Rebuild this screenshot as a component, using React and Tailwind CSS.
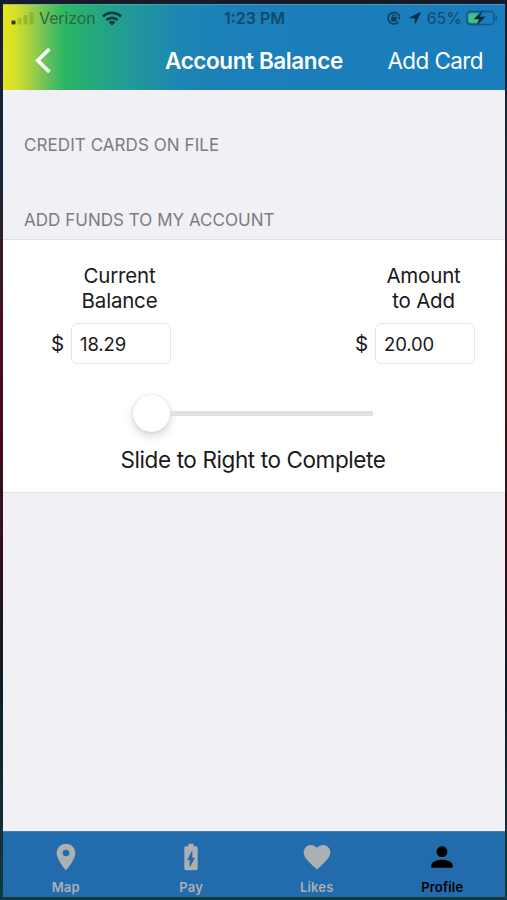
import React, { useState } from "react";
import {
  MdLocationOn,
  MdBatteryChargingFull,
  MdFavorite,
  MdPerson,
} from "react-icons/md";

const tabs = [
  { name: "Map", icon: MdLocationOn },
  { name: "Pay", icon: MdBatteryChargingFull },
  { name: "Likes", icon: MdFavorite },
  { name: "Profile", icon: MdPerson },
];

const StatusBar = () => (
  <div className="flex h-[26px] items-center justify-between pl-2 pr-[7px] text-[16px] leading-[26px] text-[#123a4c]/80">
    <div className="flex w-[140px] items-center">
      <svg width="23" height="14" viewBox="0 0 23 14">
        <rect x="0.5" y="9.5" width="4" height="4" rx="1" fill="#2b3a10" />
        <g fill="#4f7a20" opacity="0.3">
          <rect x="6.5" y="7" width="4" height="6.5" rx="1" />
          <rect x="12.5" y="4" width="4" height="9.5" rx="1" />
          <rect x="18.5" y="1" width="4" height="12.5" rx="1" />
        </g>
      </svg>
      <span className="ml-[5px] tracking-[-0.1px] text-[#2f6440]">Verizon</span>
      <svg
        className="ml-[6px]"
        width="20"
        height="15"
        viewBox="0 0 20 15"
        fill="none"
        stroke="#0e3b41"
        strokeWidth="2.8"
      >
        <path d="M1 5.6a12.8 12.8 0 0 1 18 0" />
        <path d="M4.4 9.1a8 8 0 0 1 11.2 0" />
        <path d="M10 14.4 6.7 11.2a4.7 4.7 0 0 1 6.6 0Z" fill="#0e3b41" stroke="none" />
      </svg>
    </div>
    <span className="text-[16px] font-semibold">1:23 PM</span>
    <div className="flex w-[140px] items-center justify-end">
      <svg
        width="14"
        height="14"
        viewBox="0 0 14 14"
        fill="none"
        stroke="#103a52"
        strokeWidth="1.5"
      >
        <path d="M12.5 5.5A5.8 5.8 0 1 0 11.4 11" />
        <path d="M10.5 6h3.2l-1.4 2.4Z" fill="#103a52" stroke="none" />
        <rect x="4.2" y="6.2" width="5.4" height="4.2" fill="#103a52" stroke="none" />
        <path d="M5.4 6.5V5.2a1.5 1.5 0 0 1 3 0v1.3" strokeWidth="1.1" />
      </svg>
      <svg className="ml-2" width="12" height="12" viewBox="0 0 12 12">
        <path
          d="M11.5.5.8 5.8h5.4v5.4Z"
          fill="#0c3048"
          stroke="#0c3048"
          strokeWidth="1"
          strokeLinejoin="round"
        />
      </svg>
      <span className="ml-[6px]">65%</span>
      <svg className="ml-1" width="32" height="18" viewBox="0 0 32 18">
        <rect
          x="0.75"
          y="2.5"
          width="27"
          height="13"
          rx="3.5"
          fill="none"
          stroke="#15547f"
          strokeWidth="1.3"
        />
        <rect x="2.5" y="4.2" width="10" height="9.6" rx="2" fill="#45c376" />
        <rect x="10" y="4.2" width="4.5" height="9.6" fill="#45c376" />
        <path d="M29.5 6.5v5c2.2-.9 2.2-4.1 0-5Z" fill="#15547f" />
        <path
          d="M17 .5 7.6 10.3h5.2l-2.6 7.2 9.6-10h-5.4Z"
          fill="#0b2a3a"
          stroke="#1d7cb8"
          strokeWidth="0.4"
        />
      </svg>
    </div>
  </div>
);

const Header = () => (
  <header className="h-[86px] border-t border-[#6fa6bb]/60 bg-[linear-gradient(90deg,#e6e61e_0px,#d6e028_12px,#a5cf45_28px,#66c15a_44px,#2cb764_61px,#26ab78_85px,#229b97_125px,#1d86b2_175px,#1b7fba_230px,#1a7dbd_100%)]">
    <StatusBar />
    <div className="flex h-[59px] items-center pl-8 pr-[22px] pt-px text-[22.5px] leading-[58px] text-white">
      <button aria-label="Back" className="w-[130px]">
        <svg
          className="-mt-px"
          width="16"
          height="27"
          viewBox="0 0 16 27"
          fill="none"
          stroke="currentColor"
          strokeWidth="3.6"
        >
          <path d="M14.4 2 2.7 13.5 14.4 25" />
        </svg>
      </button>
      <h1 className="grow font-semibold tracking-[-0.4px]">Account Balance</h1>
      <button className="tracking-[-0.6px]">Add Card</button>
    </div>
  </header>
);

const MoneyField = ({ label, value, onChange }) => (
  <label className="w-[121px]">
    <span className="ml-5 block w-[99px] text-center text-[20.5px] leading-[25px] tracking-[-0.2px]">
      {label[0]}
      <br />
      {label[1]}
    </span>
    <span className="mt-[10px] flex items-center justify-between">
      <span className="ml-px mt-px text-[20.5px] leading-none">$</span>
      <input
        value={value}
        onChange={onChange}
        className="h-[41px] w-[100px] rounded-[6px] border-[1.5px] border-[#e6e6e8] bg-white pl-[8px] text-[18.5px] tracking-[-0.1px] outline-none"
      />
    </span>
  </label>
);

const TabBar = () => (
  <nav className="flex h-[66px] border-t border-[#4b7fae] bg-[#226bad]">
    {tabs.map(({ name, icon: Icon }) => (
      <button
        key={name}
        className={`flex flex-1 flex-col items-center pt-[9px] ${
          name === "Profile" ? "text-black" : "text-[#adb0b3]"
        }`}
      >
        <Icon size={32} />
        <span className="mt-[6px] text-[13px] font-semibold leading-4 tracking-[0.2px]">
          {name}
        </span>
      </button>
    ))}
  </nav>
);

const App = () => {
  const [balance, setBalance] = useState("18.29");
  const [amount, setAmount] = useState("20.00");

  return (
    <div className="h-[900px] w-[507px] bg-[linear-gradient(180deg,#141b29_0px,#1c2838_180px,#4a0f1c_330px,#3a0d18_520px,#101c26_680px,#123840_100%)] pb-[3px] pl-[3px] pr-[2px] pt-1 font-['Inter',sans-serif] text-[#1a1a1a]">
      <div className="flex h-full flex-col bg-[#f0f0f5]">
        <Header />
        <main className="grow text-[17px] text-[#7c7c82]">
          <h2 className="flex h-[75px] items-end pb-[10px] pl-[21px] leading-5 tracking-[0.07px]">
            CREDIT CARDS ON FILE
          </h2>
          <h2 className="flex h-[74px] items-end pb-[9px] pl-[21px] leading-5 tracking-[0.03px]">
            ADD FUNDS TO MY ACCOUNT
          </h2>
          <section className="flex h-[254px] flex-col items-center border-y border-[#e0e0e4] bg-white text-[#1a1a1a]">
            <div className="flex w-full justify-between pl-[47px] pr-[30px] pt-[23px]">
              <MoneyField
                label={["Current", "Balance"]}
                value={balance}
                onChange={(e) => setBalance(e.target.value)}
              />
              <MoneyField
                label={["Amount", "to Add"]}
                value={amount}
                onChange={(e) => setAmount(e.target.value)}
              />
            </div>
            <div className="mr-[2px] mt-[31px] flex w-[240px] items-center">
              <div className="size-[37px] shrink-0 rounded-full bg-white shadow-[0_4px_10px_rgba(0,0,0,0.17),0_0_3px_rgba(0,0,0,0.1)]" />
              <div className="h-[5px] grow bg-[#e1e1e1]" />
            </div>
            <p className="mr-[2px] mt-[13px] text-[22.5px] leading-[30px] tracking-[-0.4px]">
              Slide to Right to Complete
            </p>
          </section>
        </main>
        <TabBar />
      </div>
    </div>
  );
};

export default App;
